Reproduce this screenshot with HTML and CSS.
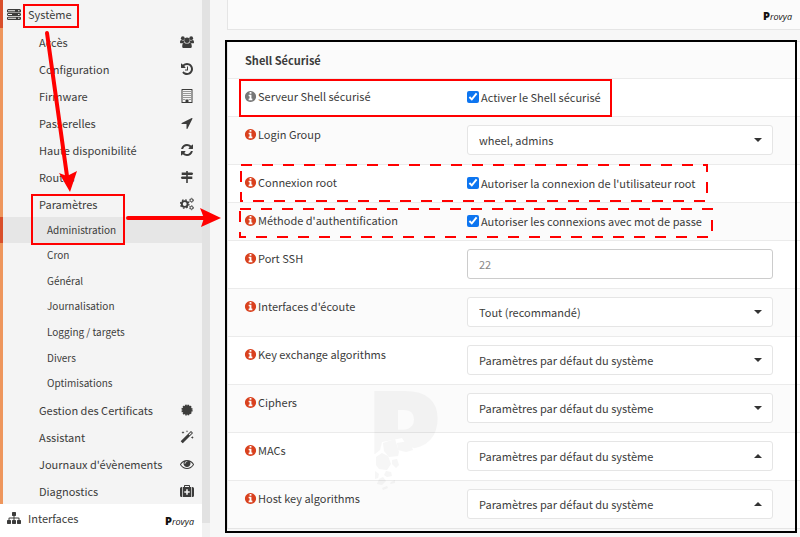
FILE: index.html
```html
<!DOCTYPE html>
<html lang="fr">
<head>
  <meta charset="UTF-8">
  <meta name="viewport" content="width=device-width, initial-scale=1">
  <title>Administration | Paramètres | Système</title>
  <link rel="stylesheet" href="styles.css">
</head>
<body>
  <!-- Icon set -->
  <svg class="sprite" aria-hidden="true">
    <symbol id="i-info" viewBox="0 0 1792 1792"><path d="M1152 1376v-160q0-14-9-23t-23-9h-96v-512q0-14-9-23t-23-9h-320q-14 0-23 9t-9 23v160q0 14 9 23t23 9h96v320h-96q-14 0-23 9t-9 23v160q0 14 9 23t23 9h448q14 0 23-9t9-23zm-128-896v-160q0-14-9-23t-23-9h-192q-14 0-23 9t-9 23v160q0 14 9 23t23 9h192q14 0 23-9t9-23zm640 416q0 209-103 385.5t-279.5 279.5-385.5 103-385.5-103-279.5-279.5-103-385.5 103-385.5 279.5-279.5 385.5-103 385.5 103 279.5 279.5 103 385.5z"/></symbol>
    <symbol id="i-refresh" viewBox="0 0 1792 1792"><path d="M1639 1056q0 5-1 7-64 268-268 434.5t-478 166.5q-146 0-282.5-55t-243.5-157l-129 129q-19 19-45 19t-45-19-19-45v-448q0-26 19-45t45-19h448q26 0 45 19t19 45-19 45l-137 137q71 66 161 102t187 36q134 0 250-65t186-179q11-17 53-117 8-23 30-23h192q13 0 22.5 9.5t9.5 22.5zm25-800v448q0 26-19 45t-45 19h-448q-26 0-45-19t-19-45 19-45l138-138q-148-137-349-137-134 0-250 65t-186 179q-11 17-53 117-8 23-30 23h-199q-13 0-22.5-9.5t-9.5-22.5v-7q65-268 270-434.5t480-166.5q146 0 284 55.5t245 156.5l130-129q19-19 45-19t45 19 19 45z"/></symbol>
    <symbol id="i-history" viewBox="0 0 1792 1792"><path d="M1664 896q0 156-61 298t-164 245-245 164-298 61q-172 0-327-72.5t-264-204.5q-7-10-6.5-22.5t8.5-20.5l137-138q10-9 25-9 16 2 23 12 73 95 179 147t225 52q104 0 198.5-40.5t163.5-109.5 109.5-163.5 40.5-198.5-40.5-198.5-109.5-163.5-163.5-109.5-198.5-40.5q-98 0-188 35.5t-160 101.5l137 138q31 30 14 69-17 40-59 40h-448q-26 0-45-19t-19-45v-448q0-42 40-59 39-17 69 14l130 129q107-101 244.5-156.5t284.5-55.5q156 0 298 61t245 164 164 245 61 298zm-640-288v448q0 14-9 23t-23 9h-320q-14 0-23-9t-9-23v-64q0-14 9-23t23-9h224v-352q0-14 9-23t23-9h64q14 0 23 9t9 23z"/></symbol>
    <symbol id="i-arrow" viewBox="0 0 1792 1792"><path d="M1593 349l-640 1280q-17 35-57 35-5 0-15-2-22-5-35.5-22.5t-13.5-39.5v-576h-576q-22 0-39.5-13.5t-22.5-35.5 4-42 29-30l1280-640q13-7 29-7 27 0 45 19 15 14 18.5 34.5t-6.5 39.5z"/></symbol>
    <symbol id="i-eye" viewBox="0 0 1792 1792"><path d="M1664 960q-152-236-381-353 61 104 61 225 0 185-131.5 316.5t-316.5 131.5-316.5-131.5-131.5-316.5q0-121 61-225-229 117-381 353 133 205 333.5 326.5t434.5 121.5 434.5-121.5 333.5-326.5zm-720-384q0-20-14-34t-34-14q-125 0-214.5 89.5t-89.5 214.5q0 20 14 34t34 14 34-14 14-34q0-86 61-147t147-61q20 0 34-14t14-34zm848 384q0 34-20 69-140 230-376.5 368.5t-499.5 138.5-499.5-139-376.5-368q-20-35-20-69t20-69q140-229 376.5-368t499.5-139 499.5 139 376.5 368q20 35 20 69z"/></symbol>
    <symbol id="i-sitemap" viewBox="0 0 1792 1792"><path d="M1792 1248v320q0 40-28 68t-68 28h-320q-40 0-68-28t-28-68v-320q0-40 28-68t68-28h96v-192h-512v192h96q40 0 68 28t28 68v320q0 40-28 68t-68 28h-320q-40 0-68-28t-28-68v-320q0-40 28-68t68-28h96v-192h-512v192h96q40 0 68 28t28 68v320q0 40-28 68t-68 28h-320q-40 0-68-28t-28-68v-320q0-40 28-68t68-28h96v-192q0-52 38-90t90-38h512v-192h-96q-40 0-68-28t-28-68v-320q0-40 28-68t68-28h320q40 0 68 28t28 68v320q0 40-28 68t-68 28h-96v192h512q52 0 90 38t38 90v192h96q40 0 68 28t28 68z"/></symbol>
    <symbol id="i-server" viewBox="0 0 14 14"><path fill-rule="evenodd" d="M1 2h12l1 1v2l-1 .5H1L0 5V3zM1 3.200v1h7v-1zM11 3.200v1h1.500v-1zM1 6h12l1 .7v1.600l-1 .7H1l-1-.7V6.700zM1 7v1h4V7zM11 7v1h1.500V7zM1 9.700h12l1 .7v1.900l-1 .7H1l-1-.7v-1.900zM1 10.800v1h8v-1zM11 10.800v1h1.500v-1z"/></symbol>
    <symbol id="i-users" viewBox="0 0 14 14"><circle cx="2.800" cy="3.200" r="1.900"/><circle cx="11.200" cy="3.200" r="1.900"/><circle cx="7" cy="5.200" r="2.700"/><path d="M0 7.400c0-1.500.4-2.500 1.200-2.500.6.500 1.800.7 2.600.3 0 1 .3 1.700.8 2.200-.8 0-1.400.3-1.900.9H1.200C.4 8.300 0 8 0 7.400zM14 7.400c0-1.500-.4-2.500-1.200-2.500-.6.500-1.800.7-2.600.3 0 1-.3 1.700-.8 2.200.8 0 1.400.3 1.900.9h1.500c.8 0 1.200-.3 1.200-.9zM2.200 11.400c0-2 .6-3.700 2-3.700 1.500 1.200 4.100 1.200 5.600 0 1.400 0 2 1.700 2 3.700 0 1-.7 1.600-1.700 1.600H3.900c-1 0-1.700-.6-1.700-1.600z"/></symbol>
    <symbol id="i-building" viewBox="0 0 14 14"><path fill-rule="evenodd" d="M2 0h10q.5 0 .5.500v13q0 .5-.5.500H2q-.5 0-.5-.5V.5Q1.500 0 2 0zM2.500 1v12h3v-2.500h3V13h3V1z"/><path d="M3.500 2h1v1h-1zM5.500 2h1v1h-1zM7.500 2h1v1h-1zM9.500 2h1v1h-1zM3.500 4h1v1h-1zM5.500 4h1v1h-1zM7.500 4h1v1h-1zM9.500 4h1v1h-1zM3.500 6h1v1h-1zM5.500 6h1v1h-1zM7.500 6h1v1h-1zM9.500 6h1v1h-1zM3.500 8h1v1h-1zM5.500 8h1v1h-1zM7.500 8h1v1h-1zM9.500 8h1v1h-1zM3.500 10h1v1h-1zM9.500 10h1v1h-1z"/></symbol>
    <symbol id="i-signs" viewBox="0 0 14 14"><path d="M6.200 1h1.600v1.500h4.400L13.200 3.700 12.200 5H7.800v1.500h4.500V9H7.800v4H6.200V9H1.800L.8 7.700l1-1.200h4.400V5H1.700V2.500h4.500z"/></symbol>
    <symbol id="i-cogs" viewBox="0 0 14 14"><g fill="none" stroke="currentColor"><circle cx="4.700" cy="7" r="2.900" stroke-width="1.900"/><circle cx="4.700" cy="7" r="4.200" stroke-width="1.300" stroke-dasharray="1.600 1.700"/><circle cx="11.500" cy="3.300" r="1.400" stroke-width="1"/><circle cx="11.500" cy="3.300" r="2.100" stroke-width=".8" stroke-dasharray="1 1.200"/><circle cx="11.500" cy="10.700" r="1.400" stroke-width="1"/><circle cx="11.500" cy="10.700" r="2.100" stroke-width=".8" stroke-dasharray="1 1.200"/></g></symbol>
    <symbol id="i-cert" viewBox="0 0 14 14"><circle cx="7" cy="7" r="4.800"/><circle cx="7" cy="7" r="4.900" fill="none" stroke="currentColor" stroke-width="1.400" stroke-dasharray="1.600 .966"/></symbol>
    <symbol id="i-magic" viewBox="0 0 14 14"><path fill-rule="evenodd" d="M11.300 1.200l1.500 1.500q.3.300 0 .6L3 13.100q-.3.300-.6 0L.9 11.600q-.3-.3 0-.6l9.800-9.800q.3-.3.600 0zM11 2.200L8.700 4.500l.8.800L11.800 3z"/><path d="M3 1l.4 1.100 1.100.4-1.100.4L3 4l-.4-1.100-1.100-.4 1.100-.4zM7 0l.3.900.9.300-.9.300-.3.900-.3-.9-.9-.3.9-.3zM12.300 6l.4 1.100 1.100.4-1.100.4-.4 1.100-.4-1.100-1.100-.4 1.100-.4z"/></symbol>
    <symbol id="i-medkit" viewBox="0 0 14 14"><path fill-rule="evenodd" d="M4 3V1.800Q4 1 4.800 1h4.400q.8 0 .8.800V3h1v10H3V3zM5 3h4V2H5zM6.200 5.300V7.200H4.300v1.600h1.900v1.900h1.600V8.800h1.900V7.200H7.800V5.300zM1.500 3h.8v10h-.8Q0 13 0 11.500v-7Q0 3 1.500 3zM12.500 3h-.8v10h.8q1.500 0 1.500-1.500v-7Q14 3 12.500 3z"/></symbol>
  </svg>

  <div class="page">
    <!-- Side navigation -->
    <nav class="sidebar">
      <a class="nav-top active" href="#"><svg class="icon"><use href="#i-server"/></svg>Système</a>
      <ul class="menu">
        <li><a href="#">Accès <svg class="icon"><use href="#i-users"/></svg></a></li>
        <li><a href="#">Configuration <svg class="icon"><use href="#i-history"/></svg></a></li>
        <li><a href="#">Firmware <svg class="icon"><use href="#i-building"/></svg></a></li>
        <li><a href="#">Passerelles <svg class="icon"><use href="#i-arrow"/></svg></a></li>
        <li><a href="#">Haute disponibilité <svg class="icon"><use href="#i-refresh"/></svg></a></li>
        <li><a href="#">Routes <svg class="icon"><use href="#i-signs"/></svg></a></li>
        <li>
          <a href="#">Paramètres <svg class="icon"><use href="#i-cogs"/></svg></a>
          <ul class="submenu">
            <li><a class="active" href="#">Administration</a></li>
            <li><a href="#">Cron</a></li>
            <li><a href="#">Général</a></li>
            <li><a href="#">Journalisation</a></li>
            <li><a href="#">Logging / targets</a></li>
            <li><a href="#">Divers</a></li>
            <li><a href="#">Optimisations</a></li>
          </ul>
        </li>
        <li><a href="#">Gestion des Certificats <svg class="icon"><use href="#i-cert"/></svg></a></li>
        <li><a href="#">Assistant <svg class="icon"><use href="#i-magic"/></svg></a></li>
        <li><a href="#">Journaux d'évènements <svg class="icon"><use href="#i-eye"/></svg></a></li>
        <li><a href="#">Diagnostics <svg class="icon"><use href="#i-medkit"/></svg></a></li>
      </ul>
      <div class="nav-last">
        <a class="nav-top" href="#"><svg class="icon"><use href="#i-sitemap"/></svg>Interfaces</a>
        <span class="brand"><b>P</b>rovya</span>
      </div>
    </nav>
    <div class="scroll"></div>

    <!-- Settings -->
    <main>
      <div class="panel previous"><span class="brand"><b>P</b>rovya</span></div>

      <form class="panel">
        <h2>Shell Sécurisé</h2>
        <div class="row">
          <span class="name"><svg class="icon muted"><use href="#i-info"/></svg>Serveur Shell sécurisé</span>
          <label class="check"><input type="checkbox" checked>Activer le Shell sécurisé</label>
        </div>
        <div class="row">
          <label class="name" for="group"><svg class="icon"><use href="#i-info"/></svg>Login Group</label>
          <div class="select"><select id="group"><option>wheel, admins</option></select></div>
        </div>
        <div class="row">
          <span class="name"><svg class="icon"><use href="#i-info"/></svg>Connexion root</span>
          <label class="check"><input type="checkbox" checked>Autoriser la connexion de l'utilisateur root</label>
        </div>
        <div class="row">
          <span class="name"><svg class="icon"><use href="#i-info"/></svg>Méthode d'authentification</span>
          <label class="check"><input type="checkbox" checked>Autoriser les connexions avec mot de passe</label>
        </div>
        <div class="row">
          <label class="name" for="port"><svg class="icon"><use href="#i-info"/></svg>Port SSH</label>
          <input id="port" type="text" placeholder="22">
        </div>
        <div class="row">
          <label class="name" for="listen"><svg class="icon"><use href="#i-info"/></svg>Interfaces d'écoute</label>
          <div class="select"><select id="listen"><option>Tout (recommandé)</option></select></div>
        </div>
        <div class="row">
          <label class="name" for="kex"><svg class="icon"><use href="#i-info"/></svg>Key exchange algorithms</label>
          <div class="select"><select id="kex"><option>Paramètres par défaut du système</option></select></div>
        </div>
        <div class="row">
          <label class="name" for="ciphers"><svg class="icon"><use href="#i-info"/></svg>Ciphers</label>
          <div class="select"><select id="ciphers"><option>Paramètres par défaut du système</option></select></div>
        </div>
        <div class="row">
          <label class="name" for="macs"><svg class="icon"><use href="#i-info"/></svg>MACs</label>
          <div class="select dropup"><select id="macs"><option>Paramètres par défaut du système</option></select></div>
        </div>
        <div class="row">
          <label class="name" for="hostkey"><svg class="icon"><use href="#i-info"/></svg>Host key algorithms</label>
          <div class="select dropup"><select id="hostkey"><option>Paramètres par défaut du système</option></select></div>
        </div>
      </form>
    </main>
  </div>

  <!-- Annotations drawn over the page -->
  <svg class="notes" width="800" height="537" aria-hidden="true">
    <defs>
      <clipPath id="broken"><path d="M370 385h70v64l-13-1-6 2-14-4-5-8-20 4-2 8-5 4h-5z"/></clipPath>
    </defs>
    <g class="watermark">
      <text x="365" y="478" clip-path="url(#broken)">P</text>
      <path d="M383 443l12-4 4 13-1 4-9 1-5-6zM376 457l6-4 6 3 3 8-4 6-8-1-3-4zM392 460l5-1 2 6-3 3-4-4zM375 471l4 3-1 4-3 1zM386 471l5 1 1 4-5 1-3-2zM379 479l4-2 3 4-4 4-5-1zM391 482l4-2v3l-5 1zM382 488l5-2 1 2-5 2z"/>
      <path d="M397 443l12-2 4 9-7 2-8-2z"/>
    </g>
    <rect class="frame" x="226" y="41" width="570" height="491"/>
    <g class="red">
      <rect x="24" y="5" width="54" height="22"/>
      <rect x="32" y="195" width="92" height="49"/>
      <rect x="240" y="80" width="371" height="36"/>
      <path class="dashed" d="M241 165H707V201H241Z"/>
      <path class="dashed" d="M240 209H712V237H240Z"/>
      <path class="arrow" d="M47 33L67 176M128 218H206"/>
    </g>
    <path class="head" d="M59 173l8 3 10-5-7 21zM200 208l21 10-20 9 3-9z"/>
  </svg>
</body>
</html>
```

FILE: styles.css
```css
* { box-sizing: border-box; }

body {
  margin: 0;
  font-family: "Noto Sans CJK JP", "Noto Sans", sans-serif;
  font-size: 11px;
  line-height: 20px;
  color: #3c3c3b;
  background: #f7f7f7;
  position: relative;
}

a { color: inherit; text-decoration: none; }
ul { list-style: none; margin: 0; padding: 0; }

.sprite { position: absolute; width: 0; height: 0; }

.icon {
  width: 14px; height: 14px;
  flex: none;
  fill: currentColor;
}

.page {
  display: flex;
  min-height: 100vh;
}

/* Sidebar */
.sidebar {
  width: 202px;
  flex: none;
  background: #fff;
}

.nav-top {
  display: flex;
  align-items: center;
  gap: 7px;
  height: 28px;
  padding-left: 7px;
}

.nav-top.active {
  background: #f4f4f4;
  border-left: 3px solid #d94f2b;
  padding-left: 4px;
}

.menu {
  background: #f4f4f4;
  border-left: 3px solid #ee965c;
}

.menu a {
  display: flex;
  align-items: center;
  justify-content: space-between;
  height: 27px;
  padding: 0 8px 0 36px;
}

.submenu {
  display: grid;
  grid-auto-rows: 1fr;
  min-height: 179px;
}

.submenu a {
  height: 100%;
  padding-left: 44px;
  font-size: 10px;
}

.submenu a.active {
  background: #e6e6e6;
  border-left: 3px solid #d94f2b;
  margin-left: -3px;
}

.nav-last {
  display: flex;
  justify-content: space-between;
  padding-right: 8px;
}

.brand {
  font: italic 9px/20px "Open Sans", sans-serif;
  color: #111;
  align-self: flex-end;
}

.brand b {
  font-size: 11px;
  font-style: normal;
  font-weight: 800;
}

.scroll {
  width: 8px;
  flex: none;
  background: #e2e2e2;
  border-bottom: 14px solid #f1f1f1;
}

/* Settings */
main {
  flex: 1;
  padding-left: 17px;
}

.panel {
  background: #fbfbfb;
  border: 1px solid #e5e5e5;
  border-right: 0;
}

.previous {
  display: flex;
  justify-content: flex-end;
  height: 30px;
  margin-bottom: 11px;
  padding: 0 8px 2px 0;
  border-top: 0;
}

h2 {
  margin: 0;
  padding: 8px 17px;
  font-size: 11px;
  font-weight: 700;
}

.row {
  display: grid;
  grid-template-columns: 223px 1fr;
  align-items: start;
  padding: 8px 27px 9px 16px;
  border-top: 1px solid #ebebeb;
}

.row:nth-child(even) { background: #fff; }

.name {
  display: flex;
  align-items: center;
  gap: 1px;
  line-height: 18px;
}

.name .icon {
  width: 13px; height: 13px;
  color: #d9411e;
}

.name .icon.muted { color: #777; }

.check {
  display: flex;
  align-items: center;
  gap: 2px;
}

.check input {
  width: 12px; height: 12px;
  margin: 0;
  accent-color: #0d75f0;
}

.select { position: relative; }

select, input[type="text"] {
  display: block;
  width: 100%;
  height: 30px;
  padding: 0 11px;
  font: inherit;
  color: inherit;
  background: #fff;
  border: 1px solid #e5e5e5;
  border-radius: 3px;
  appearance: none;
}

input[type="text"] { border-color: #ccc; }
input::placeholder { color: #888; }

.select::after {
  content: "";
  position: absolute;
  top: 13px; right: 11px;
  border: 4px solid transparent;
  border-top-color: #333;
  border-bottom: 0;
}

.select.dropup::after {
  border-top: 0;
  border-bottom: 4px solid #333;
}

/* Annotations */
.notes {
  position: absolute;
  top: 0; left: 0;
  pointer-events: none;
}

.watermark { fill: #000; opacity: 0.03; }
.watermark text { font: 800 122px "Open Sans", sans-serif; }

.frame { fill: none; stroke: #000; stroke-width: 2; }
.red { fill: none; stroke: #f00; stroke-width: 2; }
.dashed { stroke-dasharray: 11 10; }
.red .arrow { stroke-width: 4; stroke-linecap: round; }
.head { fill: #f00; }
```
